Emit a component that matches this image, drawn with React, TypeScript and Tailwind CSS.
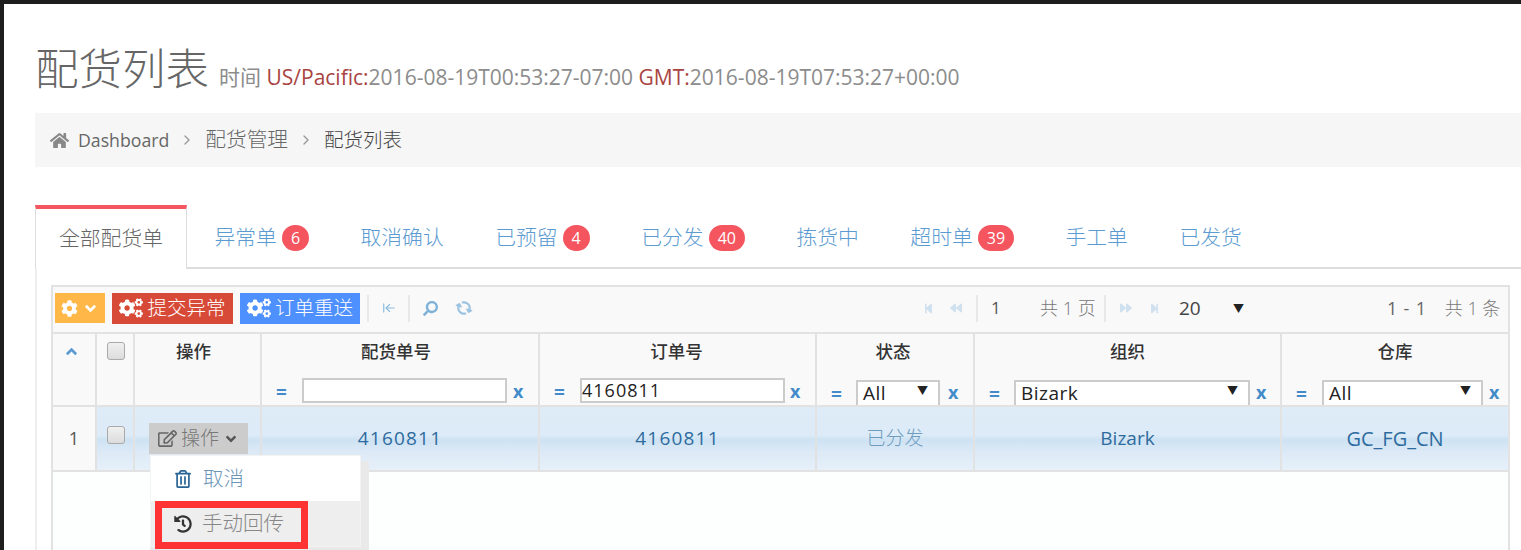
import { FaAngleDown, FaAngleUp, FaBackward, FaCog, FaCogs, FaForward, FaHistory, FaHome, FaRegEdit, FaRegTrashAlt, FaSearch, FaStepBackward, FaStepForward, FaSyncAlt } from 'react-icons/fa';
import { LuArrowLeftToLine, LuChevronRight } from 'react-icons/lu';

const tabs = [
  { label: '异常单', badge: '6' },
  { label: '取消确认' },
  { label: '已预留', badge: '4' },
  { label: '已分发', badge: '40' },
  { label: '拣货中' },
  { label: '超时单', badge: '39' },
  { label: '手工单' },
  { label: '已发货' },
];

function Eq() {
  return <span className="text-[19px] font-bold text-[#428bca] leading-none">=</span>;
}

function X() {
  return <span className="text-[18px] font-bold text-[#428bca] leading-none">x</span>;
}

function Caret({ className }: { className?: string }) {
  return <span className={`text-[11px] text-[#222] leading-none ${className ?? ''}`}>▼</span>;
}

// filter cell for the select columns
function SelectFilter({ value, width, eqWidth, xGap = 'ml-[6px]' }: { value: string; width: string; eqWidth: string; xGap?: string }) {
  return (
    <div className="flex items-start pl-[14px] h-[27px]">
      <span className={`${eqWidth} mt-[5px] shrink-0`}><Eq /></span>
      <div className={`${width} h-[25px] mt-[2px] border-2 border-b-0 border-[#ccc] bg-white flex items-start justify-between pl-[5px] pr-[10px]`}>
        <span className="text-[19px] leading-[22px] tracking-[0.5px] text-[#222] font-medium">{value}</span>
        <Caret className="mt-[3px]" />
      </div>
      <span className={`${xGap} mt-[3px]`}><X /></span>
    </div>
  );
}

function HeadCell({ title, width, titleClass, children }: { title?: string; width: string; titleClass?: string; children?: React.ReactNode }) {
  return (
    <div className={`${width} shrink-0 border-r-2 border-[#e2e2e2] bg-[#f9f9f9] flex flex-col`}>
      <div className={`h-[44px] pb-[10px] flex items-center justify-center text-[17.5px] text-[#333] font-medium ${titleClass ?? ''}`}>{title}</div>
      {children}
    </div>
  );
}

function DataCell({ width, children, muted }: { width: string; children: React.ReactNode; muted?: boolean }) {
  return (
    <div className={`${width} shrink-0 border-r-2 border-[#e2e2e2] flex items-center justify-center text-[19px] ${muted ? 'text-[#6e9cbf]' : 'text-[#2e6b9e]'}`}>
      {children}
    </div>
  );
}

function Sep() {
  return <div className="w-[2px] h-[27px] bg-[#e8e8e8]" />;
}

export default function App() {
  return (
    <div className="h-[550px] w-[1521px] overflow-hidden bg-[#1e1e1e] pt-[4px] pl-[4px] font-['Open_Sans','Noto_Sans_CJK_SC',sans-serif]">
      <div className="h-[546px] bg-white pl-[31px] overflow-hidden">
        {/* Page title */}
        <div className="pt-[38px] h-[109px] flex items-baseline text-[#666]">
          <h1 className="text-[43.5px] leading-[54px] font-light">配货列表</h1>
          <span className="ml-[10px] text-[21px] text-[#8c8c8c] whitespace-nowrap">
            时间 <span className="text-[#a94442]">US/Pacific:</span>2016-08-19T00:53:27-07:00 <span className="text-[#a94442]">GMT:</span>2016-08-19T07:53:27+00:00
          </span>
        </div>

        {/* Breadcrumb */}
        <div className="h-[54px] bg-[#f6f6f6] flex items-center pl-[15px] text-[17.7px] text-[#666]">
          <FaHome className="text-[#888] text-[19px] mr-[9px]" />
          <span>Dashboard</span>
          <LuChevronRight className="mx-[10px] text-[#999] text-[16px]" />
          <span className="text-[20.7px] font-light">配货管理</span>
          <LuChevronRight className="mx-[10px] text-[#999] text-[16px]" />
          <span className="text-[19.5px] font-light text-[#444]">配货列表</span>
        </div>

        {/* Tabs */}
        <div className="mt-[38px] flex h-[64px] border-b-2 border-[#ddd] text-[20.8px]">
          <div className="h-[64px] px-[23px] pb-[1px] bg-white border-t-[4px] border-t-[#f4555f] border-x border-x-[#ddd] flex items-center text-[#666] font-light">
            全部配货单
          </div>
          {tabs.map((t) => (
            <div key={t.label} className="ml-[3.5px] px-[24px] pt-[4px] flex items-center text-[#5b9bd1] font-light">
              {t.label}
              {t.badge && (
                <span className="ml-[5px] h-[26px] min-w-[27px] px-[9px] rounded-full bg-[#f4555f] text-white text-[16px] font-normal flex items-center justify-center">
                  {t.badge}
                </span>
              )}
            </div>
          ))}
        </div>

        {/* Tab panel */}
        <div className="border-l-2 border-[#eee] pl-[14px] pt-[16px] relative h-[290px]">
          <div className="w-[1459px] border-2 border-[#e2e2e2] border-b-0">
            {/* Toolbar */}
            <div className="h-[47px] bg-[#f9f9f9] flex items-center pl-[2px] pb-[3px] border-b-2 border-[#e2e2e2]">
              <div className="w-[50px] h-[30px] bg-[#ffb848] text-white flex items-center justify-center gap-[4px]">
                <FaCog className="text-[17px]" />
                <FaAngleDown className="text-[17px]" />
              </div>
              <div className="ml-[7px] w-[121px] h-[31px] bg-[#d84a38] text-white flex items-center justify-center gap-[4px] text-[19.5px] font-light">
                <FaCogs className="text-[24px]" />
                提交异常
              </div>
              <div className="ml-[7px] w-[120px] h-[31px] bg-[#4d90fe] text-white flex items-center justify-center gap-[4px] text-[19.5px] font-light">
                <FaCogs className="text-[24px]" />
                订单重送
              </div>
              <div className="ml-[7px]"><Sep /></div>
              <LuArrowLeftToLine className="ml-[13px] text-[14px] text-[#8cbce0]" />
              <div className="ml-[12px]"><Sep /></div>
              <FaSearch className="ml-[13px] text-[15px] text-[#7fb2d9] -scale-x-100" />
              <FaSyncAlt className="ml-[19px] text-[14px] text-[#9cc4e2] rotate-[60deg]" />

              <FaStepBackward className="ml-[452px] text-[11px] text-[#cfe0ee]" />
              <FaBackward className="ml-[16px] text-[12px] text-[#cfe0ee]" />
              <div className="ml-[14px]"><Sep /></div>
              <span className="ml-[13px] text-[17px] text-[#555] w-[49px]">1</span>
              <span className="text-[18px] text-[#777] font-light whitespace-nowrap w-[64px]">共 1 页</span>
              <Sep />
              <FaForward className="ml-[14px] text-[12px] text-[#cfe0ee]" />
              <FaStepForward className="ml-[17px] text-[11px] text-[#cfe0ee]" />
              <span className="ml-[19px] text-[19px] text-[#444] w-[54px]">20</span>
              <Caret />
              <span className="ml-[143px] text-[18px] tracking-[0.8px] text-[#666] whitespace-pre">1 - 1</span>
              <span className="ml-[18px] text-[18px] text-[#777] font-light whitespace-pre">共 1 条</span>
            </div>

            {/* Header row */}
            <div className="flex h-[73px] border-b-2 border-[#e2e2e2]">
              <HeadCell width="w-[44px]">
                <FaAngleUp className="absolute mt-[9px] ml-[10px] text-[17px] text-[#5b9bd1]" />
              </HeadCell>
              <div className="w-[38px] shrink-0 border-r-2 border-[#e2e2e2] bg-[#f9f9f9] pt-[8px] pl-[10px]">
                <div className="w-[18px] h-[18px] rounded-[3px] border border-[#aaa] bg-[linear-gradient(#f0f0f0,#dcdcdc)]" />
              </div>
              <HeadCell title="操作" width="w-[127px]" titleClass="pr-[8px]" />
              <HeadCell title="配货单号" width="w-[278px]" titleClass="pr-[8px]">
                <div className="flex items-start pl-[14px]">
                  <span className="w-[26px] mt-[3px] shrink-0"><Eq /></span>
                  <input readOnly className="w-[205px] h-[25px] border-2 border-[#ccc] bg-white" />
                  <span className="ml-[6px] mt-[2px]"><X /></span>
                </div>
              </HeadCell>
              <HeadCell title="订单号" width="w-[277px]" titleClass="pr-[2px]">
                <div className="flex items-start pl-[14px]">
                  <span className="w-[26px] mt-[3px] shrink-0"><Eq /></span>
                  <input readOnly value="4160811" className="w-[205px] h-[25px] border-2 border-[#ccc] bg-white text-[18px] tracking-[1px] text-[#222] font-medium outline-none" />
                  <span className="ml-[5px] mt-[2px]"><X /></span>
                </div>
              </HeadCell>
              <HeadCell title="状态" width="w-[158px]" titleClass="pr-[4px]"><SelectFilter value="All" width="w-[84px]" eqWidth="w-[25px]" xGap="ml-[8px]" /></HeadCell>
              <HeadCell title="组织" width="w-[307px]"><SelectFilter value="Bizark" width="w-[236px]" eqWidth="w-[25px]" /></HeadCell>
              <div className="flex-1 bg-[#f9f9f9] flex flex-col">
                <div className="h-[44px] pb-[10px] flex items-center justify-center text-[17.5px] text-[#333] font-medium">仓库</div>
                <SelectFilter value="All" width="w-[161px]" eqWidth="w-[26px]" />
              </div>
            </div>

            {/* Data row */}
            <div className="flex h-[65px] border-b-2 border-[#e2e2e2]">
              <div className="w-[44px] shrink-0 border-r-2 border-[#e2e2e2] bg-[#f9f9f9] flex items-center justify-center text-[18px] text-[#555]">1</div>
              <div className="flex flex-1 bg-[linear-gradient(#deecf8_0%,#dcebf7_45%,#cde2f3_52%,#dce9f6_70%,#e6f0fa_100%)]">
                <div className="w-[38px] shrink-0 border-r-2 border-[#e2e2e2] pt-[19px] pl-[10px]">
                  <div className="w-[18px] h-[18px] rounded-[3px] border border-[#aaa] bg-[linear-gradient(#f0f0f0,#dcdcdc)]" />
                </div>
                <div className="w-[127px] shrink-0 border-r-2 border-[#e2e2e2] pt-[16px] pl-[14px]">
                  <div className="w-[99px] h-[31px] bg-[#cccccc] flex items-center justify-center gap-[4px] text-[#777] text-[19px] font-light">
                    <FaRegEdit className="text-[19px] text-[#666]" />
                    操作
                    <FaAngleDown className="text-[16px] text-[#555]" />
                  </div>
                </div>
                <DataCell width="w-[278px]"><span className="tracking-[1.2px]">4160811</span></DataCell>
                <DataCell width="w-[277px]"><span className="tracking-[1.2px]">4160811</span></DataCell>
                <DataCell width="w-[158px]" muted><span className="font-light">已分发</span></DataCell>
                <DataCell width="w-[307px]">Bizark</DataCell>
                <div className="flex-1 flex items-center justify-center text-[20px] text-[#2e6b9e]">GC_FG_CN</div>
              </div>
            </div>
            <div className="h-[90px] bg-[#fdfefe]" />
          </div>

          {/* Action dropdown, sits over the grid */}
          <div className="absolute left-[113px] top-[192px] w-[219px] h-[94px] bg-[#e9e9e9] pr-[8px]">
            <div className="-mt-[6px] w-[211px] bg-white border border-[#f3f3f3]">
              <div className="h-[45px] bg-white flex items-center pl-[23px] gap-[11px] text-[20.5px] text-[#6c96b8] font-light">
                <FaRegTrashAlt className="text-[18px] text-[#2a6496]" />
                取消
              </div>
              <div className="h-[45px] bg-[#eeeeee] flex items-center pl-[23px] gap-[10px] text-[20.5px] text-[#888] font-light">
                <FaHistory className="text-[18px] text-[#333]" />
                手动回传
              </div>
            </div>
          </div>
          {/* Red annotation box from the screenshot */}
          <div className="absolute left-[118px] top-[232px] w-[153px] h-[48px] border-[7px] border-[#ff3333]" />
        </div>
      </div>
    </div>
  );
}
